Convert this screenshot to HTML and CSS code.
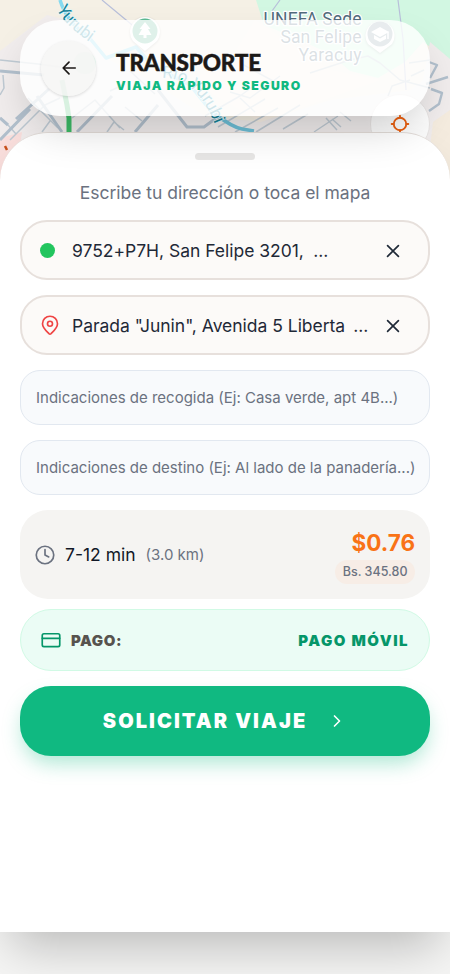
FILE: index.html
```html
<!DOCTYPE html>
<html lang="es">
<head>
<meta charset="utf-8">
<title>Transporte</title>
<link rel="stylesheet" href="styles.css">
</head>
<body>
<main class="app">
  <svg class="map" width="450" height="180" viewBox="0 0 450 180" aria-hidden="true">
    <rect width="450" height="180" fill="#f5f0e5"/>
    <path d="M0 51L47 15L75 22L110 60L150 80L205 116L260 122L330 100L410 90L450 60V180H0Z" fill="#f1eded"/>
    <path d="M230 60L255 20L330 70L380 80L260 122L190 80Z" fill="#f9f0e6"/>
    <path d="M256 0H450V60L423 42L405 62L378 78L350 71L330 54L300 40L264 25Z" fill="#d2f7e2"/>
    <path d="M430 42L450 59V112L433 122L416 116Z" fill="#f1eded"/>
    <path d="M433 122L450 110V180H426Z" fill="#f5ecdf"/>
    <path d="M0 138L22 132L15 180H0Z" fill="#fadfdd"/>
    <circle cx="85" cy="63" r="11" fill="#a7e5c8"/>
    <g fill="none" stroke="#bfcad3" stroke-width="1.5">
      <path d="M0 60L38 64L60 67M3 75L4 88L0 95M10 140L45 105L60 98M28 98L58 128M42 132L50 121M0 118L8 125L16 134"/>
      <path d="M72 118L95 100L120 128M107 132L114 122L124 130M110 91L125 84M125 107L142 121M155 94L130 71"/>
      <path d="M218 127L265 99M235 132L278 108M256 132L300 105M283 129L308 114M314 132L338 116M240 98L255 112M326 118L337 130M332 119L341 127M340 112L351 121"/>
      <path d="M205 116L240 96L255 85M230 92L250 98L280 76M240 63L275 82"/>
      <path d="M102 0L137 29M272 11L280 0M398 0L403 39L406 90" stroke="#b8bfda" stroke-width="1.2"/>
      <path d="M310 73L350 60L368 56L380 63L400 80L430 88M410 80L392 86L388 96M409 63L430 60M411 76L424 70"/>
    </g>
    <g fill="none" stroke="#b2c0cd" stroke-width="3">
      <path d="M0 71L44 75M0 118L8 125M16 119L49 89M0 140L30 109M37 96L62 132M77 132L112 96M135 132L158 105M158 90L187 127L204 127L219 116"/>
      <path d="M429 62L437 65L430 78M431 89L442 93L439 104L429 111M426 84L448 77" stroke-width="2.4"/>
    </g>
    <path d="M60 0Q67 23 88 36L106 58L136 47L152 65L190 85L215 116" fill="none" stroke="#86daf0" stroke-width="3.500"/>
    <path d="M215 114Q232 127 242 129L254 131" fill="none" stroke="#6dbfd7" stroke-width="3.500"/>
    <path d="M62 80L67 105L69 118V134" fill="none" stroke="#3dbb67" stroke-width="5"/>
    <path class="pin-shadow" d="M145 51L133 41A15 15 0 1 1 157 41Z" fill="#fff"/>
    <circle cx="145" cy="31" r="12.500" fill="#5ebb94"/>
    <path d="M145 22L139.500 29H142L138.500 35H143.500V38H146.500V35H151.500L148 29H150.500Z" fill="#fff"/>
    <path class="pin-shadow" d="M380 53L368 44A14.500 14.500 0 1 1 392 44Z" fill="#fff"/>
    <circle cx="380" cy="34" r="12.500" fill="#8aa0aa"/>
    <path d="M371 32L380 27L389 32L380 37ZM374 35V39L380 42L386 39V35L380 38.500Z" fill="#fff"/>
    <path d="M388 31.500V39" stroke="#fff" stroke-width="1.500"/>
    <g class="place" text-anchor="end">
      <text x="361.500" y="25" textLength="98">UNEFA Sede</text>
      <text x="361.500" y="43" textLength="81">San Felipe</text>
      <text x="361.500" y="60.500" textLength="63">Yaracuy</text>
    </g>
    <path id="river-a" d="M57 9Q64 26 100 49" fill="none"/>
    <path id="river-b" d="M162 78Q200 77 219 136" fill="none"/>
    <text class="river"><textPath href="#river-a">Yurubi</textPath></text>
    <text class="river"><textPath href="#river-b">Río Yurubi</textPath></text>
    <path d="M5 146L7 150" stroke="#c9501b" stroke-width="2.500"/>
  </svg>

  <button class="locate" aria-label="Mi ubicación">
    <svg width="20" height="20" viewBox="0 0 24 24"><circle cx="12" cy="12" r="7.500"/><path d="M12 2v2.500M12 19.500V22M2 12h2.500M19.500 12H22"/></svg>
  </button>

  <header class="header">
    <button class="back" aria-label="Volver">
      <svg width="20" height="20" viewBox="0 0 24 24"><path d="M19.500 12H5M12 5l-7 7 7 7"/></svg>
    </button>
    <div class="titles">
      <h1>TRANSPORTE</h1>
      <p class="tagline">VIAJA RÁPIDO Y SEGURO</p>
    </div>
  </header>

  <section class="sheet">
    <div class="handle"></div>
    <p class="hint">Escribe tu dirección o toca el mapa</p>

    <div class="address">
      <span class="origin-dot"></span>
      <span class="address-text">9752+P7H, San Felipe 3201,<span class="dots wide">...</span></span>
      <svg class="clear" width="20" height="20" viewBox="0 0 24 24"><path d="M5.500 5.500l13 13M18.500 5.500l-13 13"/></svg>
    </div>
    <div class="address">
      <svg class="pin" width="20" height="20" viewBox="0 0 24 24"><path d="M21 10.500c0 5-5.500 9.500-7.700 11.800a1.900 1.900 0 0 1-2.600 0C8.500 20 3 15.500 3 10.500a9 9 0 0 1 18 0z"/><circle cx="12" cy="10.500" r="3"/></svg>
      <span class="address-text">Parada "Junin", Avenida 5 Liberta<span class="dots">...</span></span>
      <svg class="clear" width="20" height="20" viewBox="0 0 24 24"><path d="M5.500 5.500l13 13M18.500 5.500l-13 13"/></svg>
    </div>

    <div class="note"><span>Indicaciones de recogida (Ej: Casa verde, apt 4B...)</span></div>
    <div class="note"><span>Indicaciones de destino (Ej: Al lado de la panadería...)</span></div>

    <div class="fare">
      <svg class="clock" width="20" height="20" viewBox="0 0 24 24"><circle cx="12" cy="12" r="10.500"/><path d="M12 5.500V12l4.500 2.300"/></svg>
      <span class="time">7-12 min</span>
      <span class="distance">(3.0 km)</span>
      <div class="price">
        <strong>$0.76</strong>
        <span class="local">Bs. 345.80</span>
      </div>
    </div>

    <div class="payment">
      <svg class="card" width="20" height="20" viewBox="0 0 24 24"><rect x="1.500" y="4.500" width="21" height="15.500" rx="2"/><path d="M1.500 10h21"/></svg>
      <span class="pay-label">PAGO:</span>
      <span class="pay-method">PAGO MÓVIL</span>
    </div>

    <button class="submit">
      <span>SOLICITAR VIAJE</span>
      <svg width="20" height="20" viewBox="0 0 24 24"><path d="M9 6l6 6-6 6"/></svg>
    </button>
  </section>
</main>
</body>
</html>
```
FILE: styles.css
```css
* { box-sizing: border-box; }
body { margin: 0; background: #fff; font-family: Inter, sans-serif; }
button { border: 0; padding: 0; font: inherit; }
h1, p { margin: 0; }
svg { flex: none; fill: none; stroke-linecap: round; stroke-linejoin: round; }

.app {
  position: relative;
  height: 974px;
  padding-top: 132px;
  background: #f5f5f4;
  overflow: hidden;
}
.map { position: absolute; top: 0; left: 0; stroke-linecap: butt; }
.pin-shadow { filter: drop-shadow(0 1px 1px rgba(0,0,0,.3)); }
.place { font: 17.5px Roboto, sans-serif; fill: #526c7c; stroke: #fff; stroke-width: 2.5px; paint-order: stroke; }
.river { font: 17px Roboto, sans-serif; letter-spacing: -.2px; fill: #168298; stroke: #e2f7fb; stroke-width: 1.5px; paint-order: stroke; }

.locate {
  position: absolute;
  top: 94px;
  left: 370px;
  display: grid;
  place-items: center;
  width: 60px;
  height: 60px;
  border-radius: 30px;
  background: rgba(255,255,255,.85);
  border: 1px solid #e9e6e5;
}
.locate svg { stroke: #ea6113; stroke-width: 2.2; }

.header {
  position: absolute;
  z-index: 2;
  top: 20px;
  left: 20px;
  width: 410px;
  height: 96px;
  padding: 0 21px;
  display: flex;
  align-items: center;
  gap: 20px;
  border-radius: 40px;
  background: rgba(255,255,255,.8);
  box-shadow: 0 20px 45px -12px rgba(0,0,0,.22);
}
.back {
  display: grid;
  place-items: center;
  width: 55px;
  height: 55px;
  border-radius: 50%;
  background: rgba(245,245,244,.8);
  box-shadow: 0 1px 3px rgba(0,0,0,.14);
}
.back svg { stroke: #1c1917; stroke-width: 2; }
.titles { padding-top: 7px; }
h1 {
  color: #1c1917;
  font: 900 22.5px/24px Lato, sans-serif;
  letter-spacing: -.2px;
  -webkit-text-stroke: .45px #1c1917;
}
.tagline {
  margin-top: 3px;
  color: #10b981;
  font-size: 12.2px;
  line-height: 15px;
  font-weight: 900;
  letter-spacing: 1.45px;
  white-space: nowrap;
}

.sheet {
  position: relative;
  height: 800px;
  padding: 20px 20px 0;
  border-top: 1px solid #e2dcd8;
  border-radius: 48px 48px 0 0;
  background: #fff;
  box-shadow: 0 25px 50px -12px rgba(0,0,0,.25);
}
.handle { width: 60px; height: 7px; margin: 0 auto 20px; border-radius: 4px; background: #e7e6e5; }
.hint { height: 40px; color: #6b7280; font-size: 17.5px; line-height: 26px; text-align: center; white-space: nowrap; }

.address {
  display: flex;
  align-items: center;
  height: 60px;
  margin-bottom: 15px;
  padding: 0 25px 0 18px;
  border: 2px solid #e7e0dc;
  border-radius: 27px;
  background: #fcfaf8;
}
.origin-dot { width: 15px; height: 15px; margin-right: 17px; border-radius: 50%; background: #22c55e; }
.address-text { flex: 1; color: #1f2937; font-size: 17.5px; letter-spacing: -.02px; white-space: nowrap; }
.dots { margin-left: 8px; }
.dots.wide { margin-left: 9.5px; }
.pin { margin-right: 12px; stroke: #ef4444; stroke-width: 2; }
.clear { position: relative; top: 1px; stroke: #1f2937; stroke-width: 2; }

.note {
  display: flex;
  align-items: center;
  height: 55px;
  margin-bottom: 15px;
  padding: 0 15px;
  border: 1px solid #e2e8f0;
  border-radius: 20px;
  background: #f8fafc;
  color: #6b7280;
  font-size: 15px;
  white-space: nowrap;
}

.fare {
  display: flex;
  align-items: center;
  height: 89px;
  margin-bottom: 10px;
  padding: 0 15px;
  border-radius: 28px;
  background: #f5f4f2;
}
.clock { margin-right: 10px; stroke: #6b7280; stroke-width: 2; }
.time { margin-right: 10px; color: #111827; font-size: 17.5px; }
.distance { color: #6b7280; font-size: 15px; }
.price { margin-left: auto; padding-top: 2px; display: flex; flex-direction: column; align-items: flex-end; }
.price strong { color: #f97316; font-size: 22.5px; line-height: 32px; font-weight: 700; }
.local { margin-top: 1px; padding: 0 7.5px; border-radius: 12px; background: #f7ede6; color: #6b7280; font-size: 12.5px; line-height: 24px; font-weight: 500; }

.payment {
  display: flex;
  align-items: center;
  height: 62px;
  margin-bottom: 15px;
  padding: 0 20px;
  border: 1px solid #d1fae5;
  border-radius: 31px;
  background: #ebfcf5;
}
.card { margin-right: 10px; stroke: #059669; stroke-width: 2; }
.pay-label { color: #57534e; font-size: 15px; font-weight: 900; letter-spacing: .6px; }
.pay-method { margin-left: auto; color: #059669; font-size: 15px; font-weight: 900; letter-spacing: 1.5px; }

.submit {
  display: flex;
  align-items: center;
  justify-content: center;
  gap: 20px;
  width: 410px;
  height: 70px;
  border-radius: 31px;
  background: #10b981;
  color: #fff;
  font-size: 20px;
  font-weight: 900;
  letter-spacing: 2.05px;
  box-shadow: 0 10px 20px -3px rgba(16,185,129,.35);
}
.submit svg { stroke: #fff; stroke-width: 2; }
```
